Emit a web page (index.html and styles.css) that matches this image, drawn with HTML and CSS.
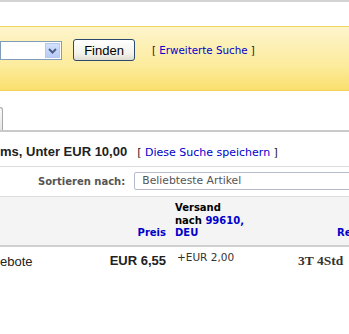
FILE: index.html
```html
<!DOCTYPE html>
<html lang="de">
<head>
    <meta charset="UTF-8">
    <meta name="viewport" content="width=device-width, initial-scale=1.0">
    <title>Suchergebnisse</title>
    <link rel="stylesheet" href="styles.css">
</head>
<body>
    <div class="topline"></div>
    <div class="searchbar">
        <div class="fake-select">
            <span class="drop">
                <svg width="9" height="6" viewBox="0 0 9 6"><path d="M1 1 L4.5 4.5 L8 1" fill="none" stroke="#4a5f86" stroke-width="2"/></svg>
            </span>
        </div>
        <button class="find">Finden</button>
        <span class="bracket">[ <a href="#">Erweiterte Suche</a> ]</span>
    </div>
    <div class="tabs">
        <div class="tab"></div>
    </div>
    <div class="heading">
        <h2>ms, Unter EUR 10,00</h2>
        <span class="bracket save">[ <a href="#">Diese Suche speichern</a> ]</span>
    </div>
    <div class="sortrow">
        <label class="sortlabel">Sortieren nach:</label>
        <div class="sortselect">Beliebteste Artikel</div>
    </div>
    <div class="results">
        <div class="head title"></div>
        <div class="head price"><a href="#">Preis</a></div>
        <div class="head ship">Versand<br>nach <a href="#">99610,</a><br><a href="#">DEU</a></div>
        <div class="head time"><a href="#">Re</a></div>

        <div class="cell title">ebote</div>
        <div class="cell price">EUR 6,55</div>
        <div class="cell ship">+EUR 2,00</div>
        <div class="cell time">3T 4Std</div>
    </div>
</body>
</html>
```

FILE: styles.css
```css
html, body { overflow: hidden; }
body { margin: 0; font-family: "Liberation Sans", Arial, sans-serif; color: #333; background: #fff; }
a { color: #0000cc; text-decoration: none; }

.topline { height: 2px; background: #d4d4d4; margin-bottom: 24px; }

.searchbar { display: flex; align-items: flex-start; height: 51px; padding-top: 12px; border-top: 1px solid #f1d25c; border-bottom: 1px solid #f2d25a; background: linear-gradient(#fdf4cc, #fcec9e 60%, #fae06d); }
.fake-select { width: 60px; height: 17px; margin-top: 2px; border: 1px solid #7f9db9; background: #fff; display: flex; justify-content: flex-end; align-items: center; }
.drop { width: 15px; height: 15px; margin-right: 1px; background: linear-gradient(#d3e0fc, #b8cbf6); border: 1px solid #b5c7ef; box-sizing: border-box; display: flex; align-items: center; justify-content: center; }
.find { margin-left: 11px; width: 62px; height: 22px; padding: 0; border: 1px solid #2c4a6e; border-radius: 3px; background: linear-gradient(#ffffff, #f2f1ea 70%, #dedcd2); font-family: "Liberation Sans", Arial, sans-serif; font-size: 13px; color: #000; }
.bracket { font-family: "DejaVu Sans", Verdana, sans-serif; font-size: 10.3px; color: #222; white-space: nowrap; }
.searchbar .bracket { margin-left: 17px; margin-top: 5px; }

.tabs { height: 23px; margin-top: 16px; border-bottom: 2px solid #c9c9c9; }
.tab { width: 2px; height: 22px; margin-top: 1px; border: 1px solid #a8a8a8; border-left: 0; border-bottom: 0; border-top-right-radius: 5px; background: linear-gradient(#fafafa, #e6e6e6); }

.heading { display: flex; align-items: baseline; padding: 12px 0 6px; border-bottom: 1px solid #dcdcdc; }
.heading h2 { margin: 0; font-size: 13px; line-height: 16px; font-weight: bold; color: #222; white-space: nowrap; }
.heading .save { margin-left: 10px; font-size: 11px; }

.sortrow { display: flex; align-items: center; gap: 9px; padding: 5px 0 6px 38px; border-bottom: 1px solid #dcdcdc; }
.sortlabel { flex: none; white-space: nowrap; font-family: "DejaVu Sans", Verdana, sans-serif; font-weight: bold; font-size: 10px; color: #555; }
.sortselect { width: 260px; flex: none; height: 18px; box-sizing: border-box; padding-left: 7px; border: 1px solid #b4bccb; border-radius: 2px; font-family: "DejaVu Sans", Verdana, sans-serif; font-size: 10.8px; line-height: 16px; color: #555; }

.results { display: grid; grid-template-columns: 112px 54px 132px 51px; }
.head { background: #f4f4f4; border-bottom: 2px solid #d0d0d0; align-self: stretch; display: flex; flex-direction: column; justify-content: flex-end; padding: 6px 0 5px; font-family: "DejaVu Sans", Verdana, sans-serif; font-weight: bold; font-size: 10px; line-height: 12.5px; color: #000; white-space: nowrap; }
.head.price { align-items: flex-end; }
.head.ship { padding-left: 9px; display: block; padding-top: 5px; }
.head.time { padding-left: 39px; overflow: hidden; }

.cell { padding-top: 6px; height: 40px; white-space: nowrap; }
.cell.title { font-size: 13px; line-height: 16px; padding-top: 7px; color: #222; }
.cell.price { display: flex; justify-content: flex-end; font-weight: bold; font-size: 13px; line-height: 16px; color: #222; }
.cell.ship { padding-left: 11px; padding-top: 4px; font-family: "DejaVu Sans", Verdana, sans-serif; font-size: 10.5px; line-height: 13px; color: #333; }
.cell.time { font-family: "Liberation Serif", "Times New Roman", serif; font-weight: bold; font-size: 13.5px; line-height: 16px; color: #333; }
```
